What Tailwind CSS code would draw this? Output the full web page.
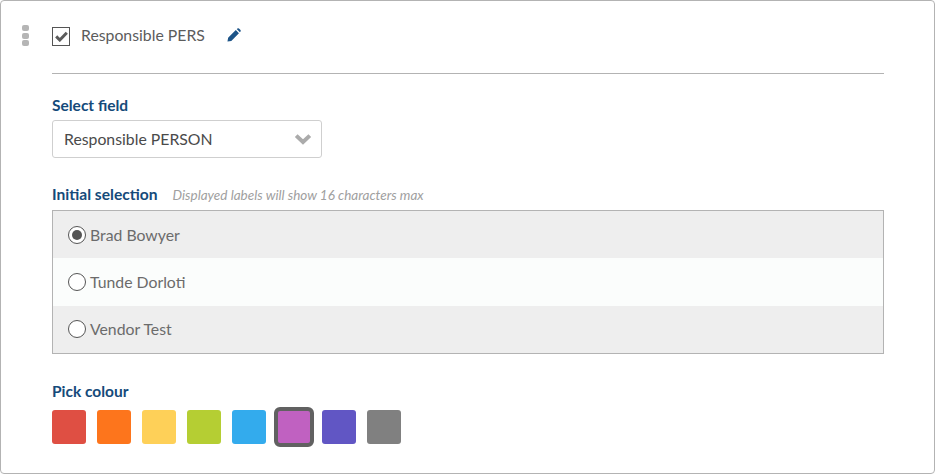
<!DOCTYPE html>
<html lang="en">
<head>
  <meta charset="UTF-8">
  <title>Field</title>
  <script src="https://cdn.jsdelivr.net/npm/@tailwindcss/browser@4"></script>
</head>
<body class="bg-white">
<div class="relative w-[935px] h-[474px] overflow-hidden rounded-[4px] border border-[#b3b3b3] bg-white pl-[51px] pr-[50px] font-['Lato','Liberation_Sans',sans-serif] text-[#5c5c5c]">
  <!-- Drag handle -->
  <div class="absolute left-[21px] top-[24px] flex flex-col gap-[1.5px]">
    <span class="block h-[6px] w-[7px] rounded-[2px] bg-[#b5b5b5]"></span>
    <span class="block h-[6px] w-[7px] rounded-[2px] bg-[#b5b5b5]"></span>
    <span class="block h-[6px] w-[7px] rounded-[2px] bg-[#b5b5b5]"></span>
  </div>

  <!-- Header -->
  <div class="flex h-[73px] items-start border-b border-[#b3b3b3] pt-[26px]">
    <span class="flex h-[19px] w-[18px] items-center justify-center border border-[#555] bg-white">
      <svg width="13" height="11" viewBox="0 0 13 11"><path d="M1.2 5.4 L4.8 9 L11.8 1.8" fill="none" stroke="#5c5c5c" stroke-width="3"/></svg>
    </span>
    <span class="-mt-[1px] ml-[11px] text-[15.8px] leading-[18px]">Responsible PERS</span>
    <svg class="ml-[22px] mt-[1px]" width="14" height="14" viewBox="0 0 15 15"><path d="M0.5 14.5 L1.2 10.4 L9.4 2.2 L12.8 5.6 L4.6 13.8 Z M10.4 1.2 L11.2 0.5 Q12 0 12.8 0.5 L14.5 2.2 Q15 3 14.5 3.8 L13.8 4.6 Z" fill="#1d5488"/></svg>
  </div>

  <!-- Select field -->
  <div class="mt-[22px] text-[15.5px] font-bold leading-[18px] text-[#154a7a]">Select field</div>
  <div class="mt-[6px] flex h-[38px] w-[270px] items-center justify-between rounded-[3px] border border-[#cfcfcf] pl-[11px] pr-[9px] text-[15.8px] text-[#4a4a4a]">
    <span>Responsible PERSON</span>
    <svg width="18" height="12" viewBox="0 0 18 12"><path d="M2.2 2.6 L9 9 L15.8 2.6" fill="none" stroke="#ababab" stroke-width="4"/></svg>
  </div>

  <!-- Initial selection -->
  <div class="mt-[28px] flex h-[18px] items-center">
    <span class="text-[15.6px] font-bold text-[#154a7a]">Initial selection</span>
    <span class="ml-[15px] text-[13.5px] italic text-[#a0a0a0]">Displayed labels will show 16 characters max</span>
  </div>
  <div class="mt-[6px] flex h-[144px] flex-col border border-[#b3b3b3] text-[15.8px] text-[#6b6b6b]">
    <div class="flex h-[47px] items-center bg-[#eeeeee] pl-[15px]">
      <span class="flex h-[18px] w-[18px] items-center justify-center rounded-full border border-[#555] bg-white">
        <span class="block h-[10px] w-[10px] rounded-full bg-[#555]"></span>
      </span>
      <span class="ml-[4px]">Brad Bowyer</span>
    </div>
    <div class="flex h-[48px] items-center bg-[#fbfdfc] pl-[15px]">
      <span class="h-[18px] w-[18px] rounded-full border border-[#555] bg-white"></span>
      <span class="ml-[4px]">Tunde Dorloti</span>
    </div>
    <div class="flex h-[47px] items-center bg-[#eeeeee] pb-[2px] pl-[15px]">
      <span class="h-[18px] w-[18px] rounded-full border border-[#555] bg-white"></span>
      <span class="ml-[4px]">Vendor Test</span>
    </div>
  </div>

  <!-- Pick colour -->
  <div class="mt-[28px] text-[15.5px] font-bold leading-[18px] text-[#154a7a]">Pick colour</div>
  <div class="mt-[10px] flex gap-[11px]">
    <span class="h-[34px] w-[34px] rounded-[3px] bg-[#df4f43]"></span>
    <span class="h-[34px] w-[34px] rounded-[3px] bg-[#fd751c]"></span>
    <span class="h-[34px] w-[34px] rounded-[3px] bg-[#fed058]"></span>
    <span class="h-[34px] w-[34px] rounded-[3px] bg-[#b5ce33]"></span>
    <span class="h-[34px] w-[34px] rounded-[3px] bg-[#33abed]"></span>
    <span class="h-[34px] w-[34px] rounded-[3px] bg-[#c061c1] outline-[4px] outline-solid outline-[#616161] -outline-offset-[1px]"></span>
    <span class="h-[34px] w-[34px] rounded-[3px] bg-[#6156c4]"></span>
    <span class="h-[34px] w-[34px] rounded-[3px] bg-[#808080]"></span>
  </div>
</div>
</body>
</html>
